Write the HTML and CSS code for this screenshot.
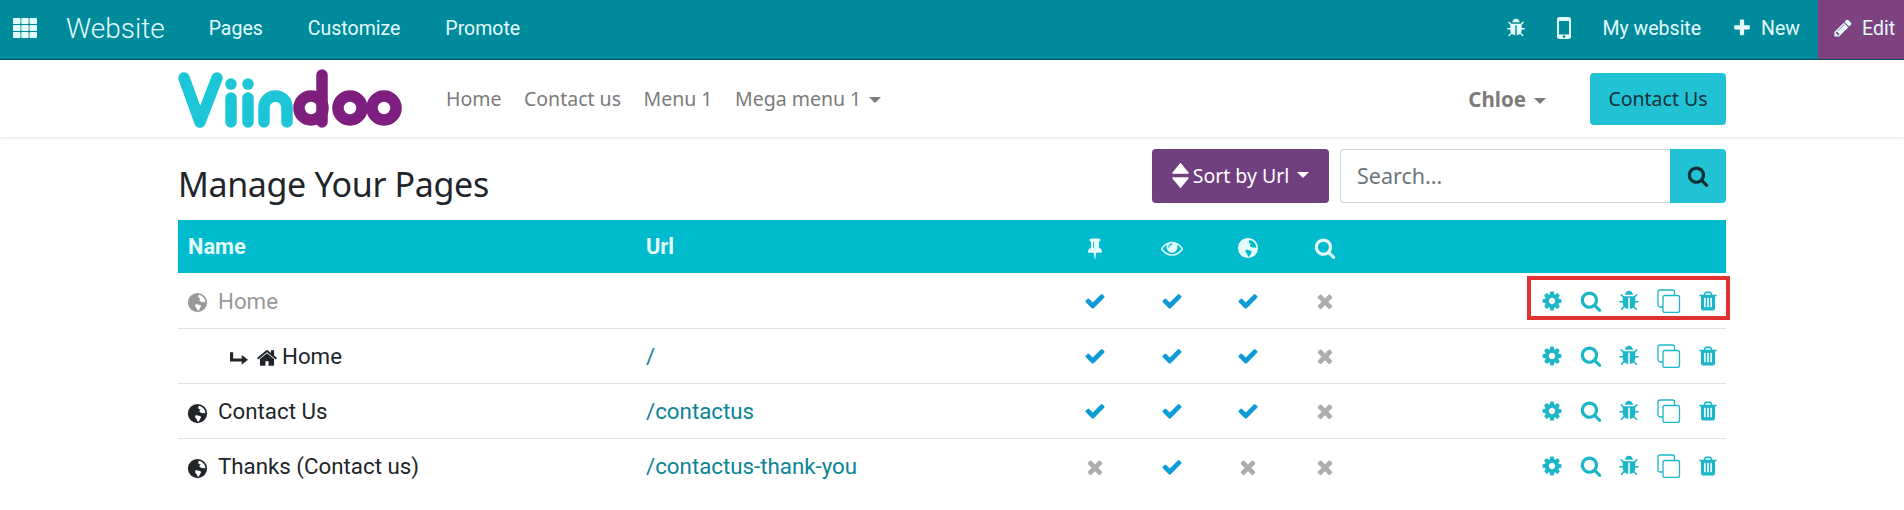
FILE: index.html
```html
<!DOCTYPE html>
<html lang="en">
<head>
    <meta charset="UTF-8">
    <title>Manage Your Pages</title>
    <link rel="stylesheet" href="styles.css">
</head>
<body>
    <svg class="sprite" xmlns="http://www.w3.org/2000/svg">
        <symbol id="i-search" viewBox="0 0 1792 1792"><path d="M1216 832q0-185-131.500-316.500t-316.500-131.500-316.500 131.500-131.500 316.500 131.500 316.500 316.500 131.500 316.500-131.500 131.500-316.500zm512 832q0 52-38 90t-90 38q-54 0-90-38l-343-342q-179 124-399 124-143 0-273.500-55.500t-225-150-150-225-55.500-273.500 55.500-273.500 150-225 225-150 273.500-55.500 273.500 55.500 225 150 150 225 55.500 273.500q0 220-124 399l343 343q37 37 37 90z"/></symbol>
        <symbol id="i-check" viewBox="0 0 1792 1792"><path d="M1671 566q0 40-28 68l-724 724-136 136q-28 28-68 28t-68-28l-136-136-362-362q-28-28-28-68t28-68l136-136q28-28 68-28t68 28l294 295 656-657q28-28 68-28t68 28l136 136q28 28 28 68z"/></symbol>
        <symbol id="i-times" viewBox="0 0 1792 1792"><path d="M1490 1322q0 40-28 68l-136 136q-28 28-68 28t-68-28l-294-294-294 294q-28 28-68 28t-68-28l-136-136q-28-28-28-68t28-68l294-294-294-294q-28-28-28-68t28-68l136-136q28-28 68-28t68 28l294 294 294-294q28-28 68-28t68 28l136 136q28 28 28 68t-28 68l-294 294 294 294q28 28 28 68z"/></symbol>
        <symbol id="i-plus" viewBox="0 0 1792 1792"><path d="M1600 736v192q0 40-28 68t-68 28h-416v416q0 40-28 68t-68 28h-192q-40 0-68-28t-28-68v-416h-416q-40 0-68-28t-28-68v-192q0-40 28-68t68-28h416v-416q0-40 28-68t68-28h192q40 0 68 28t28 68v416h416q40 0 68 28t28 68z"/></symbol>
        <symbol id="i-home" viewBox="0 0 1792 1792"><path d="M1472 992v480q0 26-19 45t-45 19h-384v-384h-256v384h-384q-26 0-45-19t-19-45v-480q0-1 .5-3t.5-3l575-474 575 474q1 2 1 6zm223-69l-62 74q-8 9-21 11h-3q-13 0-21-7l-692-577-692 577q-12 8-24 7-13-2-21-11l-62-74q-8-10-7-23.500t11-21.500l719-599q32-26 76-26t76 26l244 204v-195q0-14 9-23t23-9h192q14 0 23 9t9 23v408l219 182q10 8 11 21.500t-7 23.500z"/></symbol>
        <symbol id="i-cog" viewBox="0 0 1792 1792"><path d="M1152 896q0-106-75-181t-181-75-181 75-75 181 75 181 181 75 181-75 75-181zm512-109v222q0 12-8 23t-20 13l-185 28q-19 54-39 91 35 50 107 138 10 12 10 25t-9 23q-27 37-99 108t-94 71q-12 0-26-9l-138-108q-44 23-91 38-16 136-29 186-7 28-36 28h-222q-14 0-24.500-8.500t-11.500-21.500l-28-184q-49-16-90-37l-141 107q-10 9-25 9-14 0-25-11-126-114-165-168-7-10-7-23 0-12 8-23 15-21 51-66.500t54-70.500q-27-50-41-99l-183-27q-13-2-21-12.500t-8-23.500v-222q0-12 8-23t19-13l186-28q14-46 39-92-40-57-107-138-10-12-10-24 0-10 9-23 26-36 98.500-107.500t94.500-71.500q13 0 26 10l138 107q44-23 91-38 16-136 29-186 7-28 36-28h222q14 0 24.500 8.500t11.500 21.500l28 184q49 16 90 37l142-107q9-9 24-9 13 0 25 10 129 119 165 170 7 8 7 22 0 12-8 23-15 21-51 66.500t-54 70.500q26 50 41 98l183 28q13 2 21 12.500t8 23.500z"/></symbol>
        <symbol id="i-trash" viewBox="0 0 1792 1792"><path d="M704 1376v-704q0-14-9-23t-23-9h-64q-14 0-23 9t-9 23v704q0 14 9 23t23 9h64q14 0 23-9t9-23zm256 0v-704q0-14-9-23t-23-9h-64q-14 0-23 9t-9 23v704q0 14 9 23t23 9h64q14 0 23-9t9-23zm256 0v-704q0-14-9-23t-23-9h-64q-14 0-23 9t-9 23v704q0 14 9 23t23 9h64q14 0 23-9t9-23zm-544-992h448l-48-117q-7-9-17-11h-317q-10 2-17 11zm928 32v64q0 14-9 23t-23 9h-96v948q0 83-47 143.500t-113 60.500h-832q-66 0-113-58.500t-47-141.500v-952h-96q-14 0-23-9t-9-23v-64q0-14 9-23t23-9h309l70-167q15-37 54-63t79-26h320q40 0 79 26t54 63l70 167h309q14 0 23 9t9 23z"/></symbol>
        <symbol id="i-pencil" viewBox="0 0 1792 1792"><path d="M491 1536l91-91-235-235-91 91v107h128v128h107zm523-928q0-22-22-22-10 0-17 7l-542 542q-7 7-7 17 0 22 22 22 10 0 17-7l542-542q7-7 7-17zm-54-192l416 416-832 832h-416v-416zm683 96q0 53-37 90l-166 166-416-416 166-165q36-38 90-38 53 0 91 38l235 234q37 39 37 91z"/></symbol>
        <symbol id="i-bug" viewBox="0 0 1792 1792"><path d="M1696 960q0 26-19 45t-45 19h-224q0 171-67 290l208 209q19 19 19 45t-19 45q-18 19-45 19t-45-19l-198-197q-5 5-15 13t-42 28.500-65 36.500-82 29-97 13v-896h-128v896q-51 0-101.500-13.500t-87-33-66-39-43.500-32.500l-15-14-183 207q-20 21-48 21-24 0-43-16-19-18-20.500-44.500t15.500-46.500l202-227q-58-114-58-274h-224q-26 0-45-19t-19-45 19-45 45-19h224v-294l-173-173q-19-19-19-45t19-45 45-19 45 19l173 173h844l173-173q19-19 45-19t45 19 19 45-19 45l-173 173v294h224q26 0 45 19t19 45zm-480-576h-640q0-133 93.500-226.500t226.500-93.500 226.500 93.500 93.500 226.500z"/></symbol>
        <symbol id="i-pin" viewBox="0 0 1792 1792"><path d="M800 864v-448q0-14-9-23t-23-9-23 9-9 23v448q0 14 9 23t23 9 23-9 9-23zm672 352q0 26-19 45t-45 19h-429l-51 483q-2 12-10.500 20.500t-20.500 8.500h-1q-27 0-32-27l-76-485h-404q-26 0-45-19t-19-45q0-123 78.500-221.500t177.500-98.500v-512q-52 0-90-38t-38-90 38-90 90-38h640q52 0 90 38t38 90-38 90-90 38v512q99 0 177.500 98.500t78.500 221.500z"/></symbol>
        <symbol id="i-eye" viewBox="0 0 1792 1792"><path d="M1664 960q-152-236-381-353 61 104 61 225 0 185-131.500 316.500t-316.500 131.500-316.500-131.500-131.500-316.500q0-121 61-225-229 117-381 353 133 205 333.500 326.500t434.500 121.500 434.500-121.500 333.500-326.500zm-720-384q0-20-14-34t-34-14q-125 0-214.500 89.500t-89.500 214.500q0 20 14 34t34 14 34-14 14-34q0-86 61-147t147-61q20 0 34-14t14-34zm848 384q0 34-20 69-140 230-376.500 368.500t-499.500 138.500-499.500-139-376.500-368q-20-35-20-69t20-69q140-229 376.500-368t499.500-139 499.500 139 376.500 368q20 35 20 69z"/></symbol>
        <symbol id="i-globe" viewBox="0 0 24 24"><path fill-rule="evenodd" d="M12 1a11 11 0 1 0 0 22a11 11 0 0 0 0-22zM13.500 3.200c2.800.4 5.300 2.300 6.600 4.800c.6 1.300.9 2.600.9 4c-.7.300-1.300-.2-1.700-.8c-.7-.2-1.300 1-2.300.3c-.8-.7-1.900-.8-2.800-1.500c-.3-1 .6-1.700 1.300-2.300c-.6-.6-1.700-.4-2.300-1.100c-.5-.9-.4-2.300.3-3.400zM9.500 14.200c1.200-.5 2.600-.3 3.800.3c.9.400 2.200.3 2.600 1.300c.3 1.200-.7 2.100-1.200 3.100c-.4 1-.9 2-1.800 2.600c-.9.100-1.200-1-1.300-1.700c-.2-1-.9-1.800-1.600-2.500c-.5-.7-1-1.500-.5-3.100z"/></symbol>
        <symbol id="i-grid" viewBox="0 0 24 20"><path d="M1 0h5.500a1 1 0 0 1 1 1v4a1 1 0 0 1-1 1H1a1 1 0 0 1-1-1V1a1 1 0 0 1 1-1zM9.300 0h5.400a1 1 0 0 1 1 1v4a1 1 0 0 1-1 1H9.300a1 1 0 0 1-1-1V1a1 1 0 0 1 1-1zM17.500 0H23a1 1 0 0 1 1 1v4a1 1 0 0 1-1 1h-5.500a1 1 0 0 1-1-1V1a1 1 0 0 1 1-1zM1 7h5.500a1 1 0 0 1 1 1v4a1 1 0 0 1-1 1H1a1 1 0 0 1-1-1V8a1 1 0 0 1 1-1zM9.300 7h5.400a1 1 0 0 1 1 1v4a1 1 0 0 1-1 1H9.300a1 1 0 0 1-1-1V8a1 1 0 0 1 1-1zM17.500 7H23a1 1 0 0 1 1 1v4a1 1 0 0 1-1 1h-5.500a1 1 0 0 1-1-1V8a1 1 0 0 1 1-1zM1 14h5.500a1 1 0 0 1 1 1v4a1 1 0 0 1-1 1H1a1 1 0 0 1-1-1v-4a1 1 0 0 1 1-1zM9.300 14h5.400a1 1 0 0 1 1 1v4a1 1 0 0 1-1 1H9.300a1 1 0 0 1-1-1v-4a1 1 0 0 1 1-1zM17.500 14H23a1 1 0 0 1 1 1v4a1 1 0 0 1-1 1h-5.500a1 1 0 0 1-1-1v-4a1 1 0 0 1 1-1z"/></symbol>
        <symbol id="i-mobile" viewBox="0 0 14 22"><path fill-rule="evenodd" d="M2.500 0h9A2.500 2.500 0 0 1 14 2.500v17a2.500 2.500 0 0 1-2.500 2.500h-9A2.500 2.500 0 0 1 0 19.500v-17A2.500 2.500 0 0 1 2.500 0zM2 4v13.500h10V4zM7 18.300a1.300 1.300 0 1 0 0 2.600a1.300 1.300 0 0 0 0-2.600z"/></symbol>
        <symbol id="i-sort" viewBox="0 0 20 30"><path d="M10 0l9 11a1 1 0 0 1-1 2H2a1 1 0 0 1-1-2zM2 17h16a1 1 0 0 1 1 2l-9 11l-9-11a1 1 0 0 1 1-2z"/></symbol>
        <symbol id="i-clone" viewBox="0 0 24 24"><path fill="none" stroke="currentColor" stroke-width="1.300" d="M8 6.500h12.500a2 2 0 0 1 2 2v13a2 2 0 0 1-2 2H8a2 2 0 0 1-2-2v-13a2 2 0 0 1 2-2zM6 18H3a2 2 0 0 1-2-2V3a2 2 0 0 1 2-2h12.500a2 2 0 0 1 2 2v3.500"/></symbol>
        <symbol id="i-arrow" viewBox="0 0 20 14"><path d="M0 0h3.500v7H13V3l7 5.500L13 14v-3.600H0z"/></symbol>
    </svg>

    <header class="topbar">
        <div class="topbar-left">
            <svg class="icon-grid"><use href="#i-grid"/></svg>
            <span class="app-name">Website</span>
            <a class="top-link">Pages</a>
            <a class="top-link">Customize</a>
            <a class="top-link">Promote</a>
        </div>
        <div class="topbar-right">
            <svg class="top-icon top-bug"><use href="#i-bug"/></svg>
            <svg class="top-mobile"><use href="#i-mobile"/></svg>
            <a class="top-link top-site">My website</a>
            <a class="top-link top-new"><svg class="top-icon"><use href="#i-plus"/></svg>New</a>
            <a class="top-edit"><svg class="top-icon"><use href="#i-pencil"/></svg>Edit</a>
        </div>
    </header>

    <nav class="mainnav">
        <div class="container mainnav-inner">
            <svg class="logo" viewBox="178 68 226 62" role="img" aria-label="Viindoo">
                <g class="logo-cyan">
                    <polyline points="184,78 200,122 217,78"/>
                    <line x1="231" y1="98" x2="231" y2="122"/>
                    <line x1="231" y1="84" x2="231" y2="84.100"/>
                    <line x1="248" y1="98" x2="248" y2="122"/>
                    <line x1="248" y1="84" x2="248" y2="84.100"/>
                    <path d="M264 122V107.500A11.500 11.500 0 0 1 287 107.500V122"/>
                </g>
                <g class="logo-purple">
                    <circle cx="311" cy="108" r="12"/>
                    <line x1="322" y1="75" x2="322" y2="122"/>
                    <circle cx="350" cy="108" r="12"/>
                    <circle cx="384" cy="108" r="12"/>
                </g>
            </svg>
            <div class="menu">
                <a>Home</a>
                <a>Contact us</a>
                <a>Menu 1</a>
                <a>Mega menu 1<span class="caret"></span></a>
            </div>
            <div class="menu-right">
                <span class="user">Chloe<span class="caret"></span></span>
                <a class="btn-contact">Contact Us</a>
            </div>
        </div>
    </nav>

    <main class="container">
        <div class="page-head">
            <h1>Manage Your Pages</h1>
            <div class="tools">
                <button class="btn-sort"><svg class="icon-sort"><use href="#i-sort"/></svg>Sort by Url<span class="caret"></span></button>
                <div class="search">
                    <span class="search-input">Search...</span>
                    <span class="search-btn"><svg class="icon-md"><use href="#i-search"/></svg></span>
                </div>
            </div>
        </div>

        <table class="pages">
            <thead>
                <tr>
                    <th class="col-name">Name</th>
                    <th class="col-url">Url</th>
                    <th class="col-flag"><svg class="icon-md"><use href="#i-pin"/></svg></th>
                    <th class="col-flag"><svg class="icon-eye"><use href="#i-eye"/></svg></th>
                    <th class="col-flag"><svg class="icon-md"><use href="#i-globe"/></svg></th>
                    <th class="col-flag"><svg class="icon-md"><use href="#i-search"/></svg></th>
                    <th></th>
                </tr>
            </thead>
            <tbody>
                <tr class="muted">
                    <td><svg class="icon-globe"><use href="#i-globe"/></svg>Home</td>
                    <td></td>
                    <td class="yes"><svg class="icon-md"><use href="#i-check"/></svg></td>
                    <td class="yes"><svg class="icon-md"><use href="#i-check"/></svg></td>
                    <td class="yes"><svg class="icon-md"><use href="#i-check"/></svg></td>
                    <td class="no"><svg class="icon-md"><use href="#i-times"/></svg></td>
                    <td><div class="actions">
                        <svg class="icon-md"><use href="#i-cog"/></svg>
                        <svg class="icon-md"><use href="#i-search"/></svg>
                        <svg class="icon-md"><use href="#i-bug"/></svg>
                        <svg class="icon-clone"><use href="#i-clone"/></svg>
                        <svg class="icon-md"><use href="#i-trash"/></svg>
                    </div></td>
                </tr>
                <tr>
                    <td class="sub"><svg class="icon-arrow"><use href="#i-arrow"/></svg><svg class="icon-home"><use href="#i-home"/></svg>Home</td>
                    <td><a>/</a></td>
                    <td class="yes"><svg class="icon-md"><use href="#i-check"/></svg></td>
                    <td class="yes"><svg class="icon-md"><use href="#i-check"/></svg></td>
                    <td class="yes"><svg class="icon-md"><use href="#i-check"/></svg></td>
                    <td class="no"><svg class="icon-md"><use href="#i-times"/></svg></td>
                    <td><div class="actions">
                        <svg class="icon-md"><use href="#i-cog"/></svg>
                        <svg class="icon-md"><use href="#i-search"/></svg>
                        <svg class="icon-md"><use href="#i-bug"/></svg>
                        <svg class="icon-clone"><use href="#i-clone"/></svg>
                        <svg class="icon-md"><use href="#i-trash"/></svg>
                    </div></td>
                </tr>
                <tr>
                    <td><svg class="icon-globe"><use href="#i-globe"/></svg>Contact Us</td>
                    <td><a>/contactus</a></td>
                    <td class="yes"><svg class="icon-md"><use href="#i-check"/></svg></td>
                    <td class="yes"><svg class="icon-md"><use href="#i-check"/></svg></td>
                    <td class="yes"><svg class="icon-md"><use href="#i-check"/></svg></td>
                    <td class="no"><svg class="icon-md"><use href="#i-times"/></svg></td>
                    <td><div class="actions">
                        <svg class="icon-md"><use href="#i-cog"/></svg>
                        <svg class="icon-md"><use href="#i-search"/></svg>
                        <svg class="icon-md"><use href="#i-bug"/></svg>
                        <svg class="icon-clone"><use href="#i-clone"/></svg>
                        <svg class="icon-md"><use href="#i-trash"/></svg>
                    </div></td>
                </tr>
                <tr class="last">
                    <td><svg class="icon-globe"><use href="#i-globe"/></svg>Thanks (Contact us)</td>
                    <td><a>/contactus-thank-you</a></td>
                    <td class="no"><svg class="icon-md"><use href="#i-times"/></svg></td>
                    <td class="yes"><svg class="icon-md"><use href="#i-check"/></svg></td>
                    <td class="no"><svg class="icon-md"><use href="#i-times"/></svg></td>
                    <td class="no"><svg class="icon-md"><use href="#i-times"/></svg></td>
                    <td><div class="actions">
                        <svg class="icon-md"><use href="#i-cog"/></svg>
                        <svg class="icon-md"><use href="#i-search"/></svg>
                        <svg class="icon-md"><use href="#i-bug"/></svg>
                        <svg class="icon-clone"><use href="#i-clone"/></svg>
                        <svg class="icon-md"><use href="#i-trash"/></svg>
                    </div></td>
                </tr>
            </tbody>
        </table>
    </main>

    <!-- red annotation box from the screenshot -->
    <div class="callout"></div>
</body>
</html>
```

FILE: styles.css
```css
body {
    margin: 0;
    height: 510px;
    overflow: hidden;
    position: relative;
    background-color: #fff;
    color: #212529;
    font-family: Roboto, sans-serif;
}

svg {
    fill: currentColor;
}

.sprite {
    display: none;
}

.container {
    width: 1548px;
    margin: 0 auto;
}

/* top bar */
.topbar {
    height: 59px;
    display: flex;
    justify-content: space-between;
    background-color: #008b9c;
    border-bottom: 1px solid #00505a;
    color: #e4fbfc;
    font-size: 19.500px;
}

.topbar-left, .topbar-right {
    height: 56px;
    display: flex;
    align-items: center;
}

.icon-grid {
    width: 26px;
    height: 20px;
    margin-left: 12px;
    margin-right: 28px;
}

.app-name {
    font-size: 28px;
    font-weight: 300;
    margin-right: 44px;
}

.top-link {
    margin-right: 45px;
}

.top-icon {
    width: 20px;
    height: 20px;
}

.top-bug {
    margin-right: 31px;
}

.top-mobile {
    width: 14px;
    height: 22px;
    margin-right: 32px;
}

.topbar-right .top-site {
    margin-right: 31px;
}

.topbar-right .top-new {
    display: flex;
    align-items: center;
    gap: 9px;
    margin-right: 18px;
}

.top-edit {
    width: 86px;
    height: 59px;
    align-self: flex-start;
    box-sizing: border-box;
    padding: 0 0 3px 15px;
    display: flex;
    align-items: center;
    gap: 9px;
    background-color: #7f4281;
    white-space: nowrap;
    overflow: hidden;
}

/* main navigation */
.mainnav {
    height: 77px;
    box-shadow: 0 1px 3px rgba(0, 0, 0, 0.12);
    font-family: "Noto Sans", sans-serif;
    font-size: 19.500px;
    color: #7b7b7b;
}

.mainnav-inner {
    height: 100%;
    display: flex;
    align-items: center;
}

.logo {
    width: 226px;
    height: 62px;
    margin-right: 42px;
}

.logo-cyan, .logo-purple {
    fill: none;
    stroke-width: 11.500;
    stroke-linecap: round;
    stroke-linejoin: round;
}

.logo-cyan {
    stroke: #1cc6d6;
}

.logo-purple {
    stroke: #7e1f7f;
}

.menu {
    display: flex;
    gap: 22.500px;
}

.caret {
    display: inline-block;
    margin-left: 8px;
    vertical-align: 3px;
    border-top: 6px solid currentColor;
    border-left: 6px solid transparent;
    border-right: 6px solid transparent;
}

.menu-right {
    margin-left: auto;
    display: flex;
    align-items: center;
    gap: 44px;
}

.user {
    font-weight: 700;
    font-size: 20.500px;
}

.btn-contact {
    width: 136px;
    height: 52px;
    display: flex;
    align-items: center;
    justify-content: center;
    background-color: #21c2d3;
    border-radius: 4px;
    color: #16323a;
}

/* page heading */
.page-head {
    height: 83px;
    display: flex;
    justify-content: space-between;
    font-family: "Noto Sans", sans-serif;
}

h1 {
    margin: 22px 0 0;
    font-size: 34px;
    font-weight: 400;
    letter-spacing: -0.360px;
    line-height: 50px;
}

.tools {
    display: flex;
    gap: 11px;
    padding-top: 12px;
}

.btn-sort {
    width: 177px;
    height: 54px;
    display: flex;
    align-items: center;
    justify-content: center;
    padding: 0 0 2px;
    border: none;
    border-radius: 4px;
    background-color: #6f3f80;
    color: #fff;
    font-family: inherit;
    font-size: 19.500px;
}

.icon-sort {
    width: 17px;
    height: 27px;
    margin-right: 4px;
}

.search {
    width: 386px;
    height: 54px;
    display: flex;
}

.search-input {
    flex: 1;
    display: flex;
    align-items: center;
    padding: 0 0 2px 16px;
    box-sizing: border-box;
    border: 1px solid #ced4da;
    border-right: none;
    border-radius: 4px 0 0 4px;
    color: #6c757d;
    font-size: 21.500px;
}

.search-btn {
    width: 56px;
    display: flex;
    align-items: center;
    justify-content: center;
    background-color: #21c2d3;
    border-radius: 0 4px 4px 0;
    color: #0f2f36;
}

/* table */
.pages {
    width: 100%;
    table-layout: fixed;
    border-collapse: collapse;
    font-size: 22.300px;
}

.pages th {
    height: 53px;
    padding: 0 10px;
    background-color: #00bace;
    color: #e4fbfc;
    text-align: left;
    font-weight: 700;
    font-size: 21.800px;
}

.pages .col-name {
    width: 438px;
}

.pages .col-url {
    width: 400.500px;
}

.pages .col-flag {
    width: 56.800px;
    text-align: center;
}

.pages td {
    height: 54px;
    padding: 0 10px;
    border-bottom: 1px solid #dee2e6;
}

.pages .muted td {
    height: 55px;
}

.pages .last td {
    padding-bottom: 2px;
    border-bottom: none;
}

.pages a {
    color: #0a8593;
}

.pages svg {
    vertical-align: middle;
}

.muted td:first-child {
    color: #999;
}

.icon-md {
    width: 22px;
    height: 22px;
}

.icon-eye {
    width: 22px;
    height: 22px;
}

.icon-globe {
    width: 21px;
    height: 21px;
    margin: 0 10px 0 -1px;
}

.sub {
    padding-left: 52px !important;
}

.icon-arrow {
    width: 18px;
    height: 13px;
    margin-right: 8px;
}

.icon-home {
    width: 22px;
    height: 22px;
    margin-right: 4px;
}

.yes, .no {
    padding: 0 !important;
}

.yes svg, .no svg {
    display: block;
    margin: 0 auto;
}

.yes {
    color: #0d9bd6;
}

.no {
    color: #adadad;
}

.actions {
    display: flex;
    justify-content: flex-end;
    align-items: center;
    gap: 16.500px;
    margin-right: -3px;
    color: #1cb6c9;
}

.icon-clone {
    width: 24px;
    height: 24px;
}

/* sits on top of the first row, marks the action icons */
.callout {
    position: absolute;
    left: 1527px;
    top: 276px;
    width: 203px;
    height: 44px;
    box-sizing: border-box;
    border: 4px solid #e03232;
}
```
